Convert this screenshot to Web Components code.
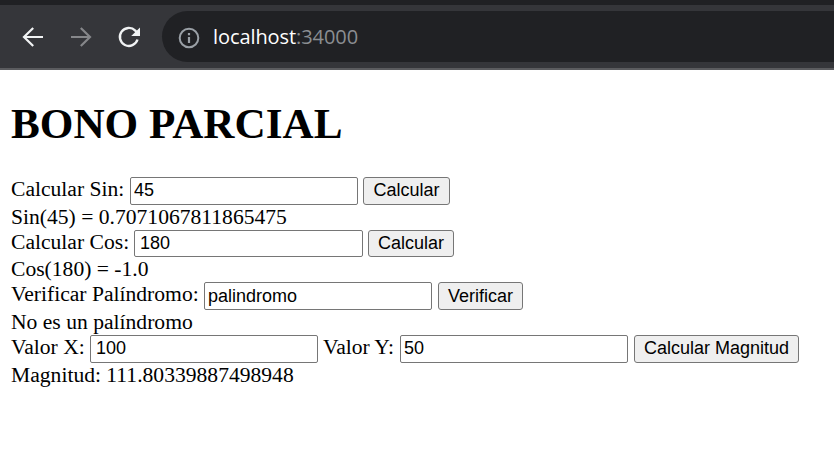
<!DOCTYPE html>
<html lang="es"><head><meta charset="utf-8"><title>Bono parcial</title>
<style>html,body{margin:0;background:#fff}body{height:474px;overflow:hidden;font:21.6px/25px "Liberation Serif",serif;color:#000}</style></head>
<body>
<browser-bar><span slot="host">localhost</span><span slot="port">:34000</span></browser-bar>
<bono-page>
<h1 slot="title">BONO PARCIAL</h1>
<calc-form style="--h:28px"><calc-field style="--w:119px" value="45">Calcular Sin:</calc-field><calc-button style="--w:87px">Calcular</calc-button><span slot="result">Sin(45) = 0.7071067811865475</span></calc-form>
<calc-form style="--h:27px"><calc-field style="--w:123px;--fw:229px;--pad:5px" value="180">Calcular Cos:</calc-field><calc-button style="--w:86px">Calcular</calc-button><span slot="result">Cos(180) = -1.0</span></calc-form>
<calc-form style="--h:28px"><calc-field style="--w:193px;--drop:2px" value="palindromo">Verificar Palíndromo:</calc-field><calc-button style="--w:85px;--ml:1px;--drop:2px">Verificar</calc-button><span slot="result">No es un palíndromo</span></calc-form>
<calc-form style="--h:28px"><calc-field style="--w:79px;--pad:5px" value="100">Valor X:</calc-field><calc-field style="--w:77px" value="50">Valor Y:</calc-field><calc-button style="--w:165px;--ml:1px">Calcular Magnitud</calc-button><span slot="result">Magnitud: 111.80339887498948</span></calc-form>
</bono-page>
<script>
const define=(name,html,setup)=>customElements.define(name,class extends HTMLElement{
  constructor(){super();this.attachShadow({mode:'open'}).innerHTML=html;}
  connectedCallback(){if(setup)setup(this);}
});
define('browser-bar',`<style>
:host{display:flex;box-sizing:border-box;height:70px;padding:6px 0 6px 19px;align-items:center;border-top:5px solid #202124;border-bottom:2px solid #5b5c5f;background:#35363a}
svg{display:block;flex:none;fill:none}
.nav{width:28px;height:28px;margin-right:20px}
.address{display:flex;align-items:center;box-sizing:border-box;height:51px;flex:1;border-radius:26px 0 0 26px;background:#202124;padding-left:16px;margin-left:-1px;font:20px/28px "Open Sans","Noto Sans",sans-serif;letter-spacing:-.08px;color:#fff}
.address svg{margin:2px 13px 0 0}
.port{color:#8b8e92}
</style>
<svg class="nav" viewBox="0 0 28 28" stroke="#f1f3f4" stroke-width="2.2"><path d="M24 14H5M14.2 5L5 14l9.2 9"/></svg>
<svg class="nav" viewBox="0 0 28 28" stroke="#86878a" stroke-width="2.2"><path d="M4 14h19M13.8 5L23 14l-9.2 9"/></svg>
<svg class="nav" viewBox="0 0 28 28" stroke="#f1f3f4" stroke-width="2.4"><path d="M22.5 16.5a9 9 0 1 1-2.2-8.9l1.5 1.6"/><path d="M25 4.5V13h-8.8z" fill="#f1f3f4" stroke="none"/></svg>
<div class="address"><svg width="22" height="22" viewBox="0 0 22 22"><circle cx="11" cy="11" r="9.3" stroke="#9aa0a6" stroke-width="2"/><path d="M11 10v6M11 6v2.2" stroke="#9aa0a6" stroke-width="2.2"/></svg><slot name="host"></slot><span class="port"><slot name="port"></slot></span></div>`);
define('bono-page',`<style>
:host{display:block;padding:29px 11px 0}
::slotted(h1){margin:0 0 28px;font:bold 43.2px/50px "Liberation Serif",serif}
</style><slot name="title"></slot><slot></slot>`);
define('calc-form',`<style>
:host{display:grid;grid-template-rows:var(--h,28px) 25px}
.line{display:flex;gap:5px;height:var(--h,28px)}
.result{line-height:24px;white-space:pre}
</style><div class="line"><slot></slot></div><div class="result"><slot name="result"></slot></div>`);
define('calc-field',`<style>
:host{display:flex;flex:none}
label{width:var(--w);line-height:25px;white-space:nowrap}
input{box-sizing:border-box;width:var(--fw,228px);height:100%;margin:0;border:1px solid #767676;border-radius:2px;padding:var(--drop,0px) 3px 1px var(--pad,3px);font:18px "Liberation Sans",sans-serif;color:#000;background:#fff;outline:0}
</style><label for="field"><slot></slot></label><input id="field">`,el=>el.shadowRoot.querySelector('input').value=el.getAttribute('value'));
define('calc-button',`<style>
:host{display:block;flex:none;margin-left:var(--ml,0)}
button{display:block;box-sizing:border-box;width:var(--w);height:100%;margin:0;padding:var(--drop,0px) 0 1px;border:1px solid #767676;border-radius:3px;background:#efefef;color:#000;font:18px "Liberation Sans",sans-serif;white-space:nowrap}
</style><button type="button"><slot></slot></button>`);
</script></body></html>
